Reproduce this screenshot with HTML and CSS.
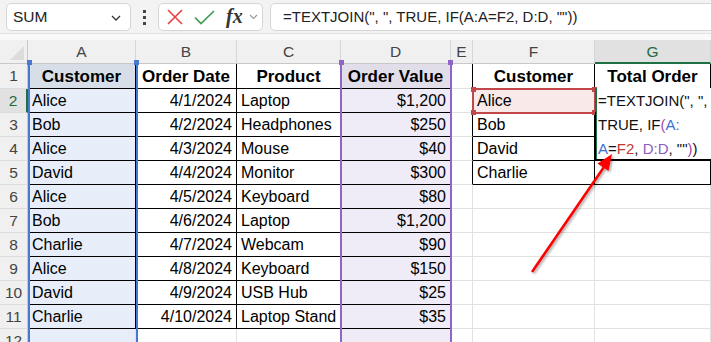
FILE: index.html
```html
<!DOCTYPE html>
<html>
<head>
<meta charset="utf-8">
<link rel="stylesheet" href="styles.css">
</head>
<body>
<div class="app">
  <div class="toolbar">
    <div class="namebox">
      <span class="nb-text">SUM</span>
      <svg class="nb-chev" width="10" height="6" viewBox="0 0 10 6"><path d="M1 1 L5 5 L9 1" fill="none" stroke="#333" stroke-width="1.3"/></svg>
    </div>
    <div class="dots"><i></i><i></i><i></i></div>
    <div class="iconbox">
      <svg width="16" height="16" viewBox="0 0 16 16"><path d="M1 1 L15 15 M15 1 L1 15" stroke="#e8403f" stroke-width="1.6" fill="none"/></svg>
      <svg width="21" height="15" viewBox="0 0 21 15"><path d="M1 7.5 L7 13.5 L20 1" stroke="#3f9a52" stroke-width="1.7" fill="none"/></svg>
      <span class="fx">fx</span>
      <svg width="9" height="6" viewBox="0 0 9 6"><path d="M1 1 L4.5 4.5 L8 1" fill="none" stroke="#999" stroke-width="1.2"/></svg>
    </div>
    <div class="formula">=TEXTJOIN(", ", TRUE, IF(A:A=F2, D:D, ""))</div>
  </div>
  <div class="strip"></div>
  <div class="sheet">
    <div class="corner"><span class="tri"></span></div>
    <div class="ch">A</div><div class="ch">B</div><div class="ch">C</div><div class="ch">D</div><div class="ch">E</div><div class="ch">F</div><div class="ch sel">G</div>

    <div class="rh">1</div>
    <div class="c bk hd fa1">Customer</div><div class="c bk hd">Order Date</div><div class="c bk hd">Product</div><div class="c bk hd fd1">Order Value</div><div class="c bkr"></div><div class="c bk hd">Customer</div><div class="c bk hd">Total Order</div>

    <div class="rh sel">2</div>
    <div class="c bk fa">Alice</div><div class="c bk r">4/1/2024</div><div class="c bk">Laptop</div><div class="c bk r fd">$1,200</div><div class="c bkr"></div><div class="c bk ff">Alice</div><div class="c"></div>

    <div class="rh">3</div>
    <div class="c bk fa">Bob</div><div class="c bk r">4/2/2024</div><div class="c bk">Headphones</div><div class="c bk r fd">$250</div><div class="c bkr"></div><div class="c bk">Bob</div><div class="c"></div>

    <div class="rh">4</div>
    <div class="c bk fa">Alice</div><div class="c bk r">4/3/2024</div><div class="c bk">Mouse</div><div class="c bk r fd">$40</div><div class="c bkr"></div><div class="c bk">David</div><div class="c bk"></div>

    <div class="rh">5</div>
    <div class="c bk fa">David</div><div class="c bk r">4/4/2024</div><div class="c bk">Monitor</div><div class="c bk r fd">$300</div><div class="c bkr"></div><div class="c bk">Charlie</div><div class="c bk"></div>

    <div class="rh">6</div>
    <div class="c bk fa">Alice</div><div class="c bk r">4/5/2024</div><div class="c bk">Keyboard</div><div class="c bk r fd">$80</div><div class="c"></div><div class="c"></div><div class="c"></div>

    <div class="rh">7</div>
    <div class="c bk fa">Bob</div><div class="c bk r">4/6/2024</div><div class="c bk">Laptop</div><div class="c bk r fd">$1,200</div><div class="c"></div><div class="c"></div><div class="c"></div>

    <div class="rh">8</div>
    <div class="c bk fa">Charlie</div><div class="c bk r">4/7/2024</div><div class="c bk">Webcam</div><div class="c bk r fd">$90</div><div class="c"></div><div class="c"></div><div class="c"></div>

    <div class="rh">9</div>
    <div class="c bk fa">Alice</div><div class="c bk r">4/8/2024</div><div class="c bk">Keyboard</div><div class="c bk r fd">$150</div><div class="c"></div><div class="c"></div><div class="c"></div>

    <div class="rh">10</div>
    <div class="c bk fa">David</div><div class="c bk r">4/9/2024</div><div class="c bk">USB Hub</div><div class="c bk r fd">$25</div><div class="c"></div><div class="c"></div><div class="c"></div>

    <div class="rh">11</div>
    <div class="c bk fa">Charlie</div><div class="c bk r">4/10/2024</div><div class="c bk">Laptop Stand</div><div class="c bk r fd">$35</div><div class="c"></div><div class="c"></div><div class="c"></div>

    <div class="rh">12</div>
    <div class="c fa"></div><div class="c"></div><div class="c"></div><div class="c fd"></div><div class="c"></div><div class="c"></div><div class="c"></div>

    <div class="hl hl-a"><span class="h tl"></span><span class="h tr"></span></div>
    <div class="hl hl-d"><span class="h tl"></span><span class="h tr"></span></div>
    <div class="hl hl-f"><span class="h tl"></span><span class="h tr"></span><span class="h bl"></span><span class="h br"></span></div>
    <div class="edit">
      <div>=TEXTJOIN(", ",</div>
      <div>TRUE, IF<span class="pp">(</span><span class="rb">A:</span></div>
      <div><span class="rb">A</span>=<span class="rr">F2</span>, <span class="rp">D:D</span>, ""<span class="pp">)</span>)</div>
    </div>
  </div>
  <svg class="arrow" width="711" height="342" viewBox="0 0 711 342">
    <defs>
      <filter id="sh" x="-20%" y="-20%" width="140%" height="140%">
        <feDropShadow dx="1.5" dy="1.5" stdDeviation="1.2" flood-color="#000" flood-opacity="0.35"/>
      </filter>
    </defs>
    <g filter="url(#sh)">
      <line x1="532" y1="272" x2="604" y2="167" stroke="#ff0000" stroke-width="2.6"/>
      <polygon points="612,154 608.5,171 597.5,163.5" fill="#ff0000"/>
    </g>
  </svg>
</div>
</body>
</html>
```

FILE: styles.css
```css
html, body {
  margin: 0;
  padding: 0;
}
body {
  width: 711px;
  height: 342px;
  overflow: hidden;
  background: #ffffff;
  font-family: "Liberation Sans", Arial, sans-serif;
  color: #000;
}
.app {
  position: relative;
  width: 711px;
  height: 342px;
  overflow: hidden;
}
.toolbar {
  height: 34px;
  background: #f3f3f3;
  display: flex;
  align-items: flex-start;
  padding-top: 3px;
  box-sizing: border-box;
  border-bottom: 1px solid #e2e2e2;
}
.namebox {
  margin-left: 6px;
  width: 125px;
  height: 28px;
  box-sizing: border-box;
  background: #fff;
  border: 1px solid #d6d6d6;
  border-radius: 5px;
  display: flex;
  align-items: center;
  justify-content: space-between;
  padding: 0 9px 0 6px;
  font-size: 15.5px;
  color: #222;
}
.nb-chev { margin-top: 1px; }
.dots {
  width: 27px;
  display: flex;
  flex-direction: column;
  align-items: center;
  justify-content: center;
  gap: 3px;
  height: 28px;
}
.dots i {
  display: block;
  width: 3px;
  height: 3px;
  background: #444;
}
.iconbox {
  width: 105px;
  height: 28px;
  box-sizing: border-box;
  background: #fff;
  border: 1px solid #d6d6d6;
  border-radius: 5px;
  display: flex;
  align-items: center;
  padding-left: 8px;
  gap: 0;
}
.iconbox svg:nth-child(1) { margin-right: 11px; }
.iconbox svg:nth-child(2) { margin-right: 11px; }
.fx {
  font-family: "Liberation Serif", "DejaVu Serif", serif;
  font-style: italic;
  font-weight: bold;
  font-size: 20px;
  color: #333;
  margin-right: 6px;
  line-height: 1;
  margin-top: -2px;
}
.formula {
  margin-left: 7px;
  flex: 1;
  height: 28px;
  box-sizing: border-box;
  background: #fff;
  border: 1px solid #d6d6d6;
  border-radius: 5px;
  margin-right: -10px;
  padding-left: 12px;
  font-size: 15px;
  line-height: 26px;
  color: #222;
  white-space: nowrap;
}
.strip {
  height: 6px;
  background: #f9f9f9;
}
.sheet {
  position: relative;
  display: grid;
  grid-template-columns: 28px 108px 101px 104px 110px 22px 122px 1fr;
  grid-template-rows: 24px 25px repeat(11, 24px);
}
.corner {
  background: #f0f0f0;
  border-right: 1px solid #c8c8c8;
  border-bottom: 1px solid #c8c8c8;
  position: relative;
  box-sizing: border-box;
}
.corner .tri {
  position: absolute;
  right: 3px;
  bottom: 3px;
  width: 0;
  height: 0;
  border-left: 14px solid transparent;
  border-bottom: 14px solid #dcdcdc;
}
.ch {
  background: #f0f0f0;
  border-right: 1px solid #d6d6d6;
  border-bottom: 1px solid #c8c8c8;
  box-sizing: border-box;
  text-align: center;
  font-size: 15.5px;
  line-height: 24px;
  color: #444;
}
.ch.sel {
  background: #e1e1e1;
  color: #1e6b40;
  border-bottom: 2px solid #1e7145;
}
.rh {
  background: #f0f0f0;
  border-right: 1px solid #c8c8c8;
  border-bottom: 1px solid #dcdcdc;
  box-sizing: border-box;
  text-align: center;
  font-size: 15.5px;
  line-height: 24px;
  color: #444;
  overflow: hidden;
}
.rh.sel {
  background: #e1e1e1;
  color: #1e6b40;
  border-right: 2px solid #1e7145;
}
.c {
  border-right: 1px solid #e1e1e1;
  border-bottom: 1px solid #e1e1e1;
  box-sizing: border-box;
  font-size: 16px;
  line-height: 24px;
  padding: 0 4px;
  white-space: nowrap;
  overflow: hidden;
}
.c.bk {
  border-right-color: #000;
  border-bottom-color: #000;
}
.c.bkr {
  border-right-color: #000;
}
.c.r { text-align: right; padding-right: 4px; }
.c.hd {
  font-weight: bold;
  font-size: 17px;
  text-align: center;
  line-height: 26px;
  padding: 0;
}
.fa { background: #e8eef9; }
.fa1 { background: #d7dee8; }
.fd { background: #efecf7; }
.fd1 { background: #e1deea; }
.ff { background: #fae9e9; }

.hl {
  position: absolute;
  box-sizing: border-box;
  pointer-events: none;
}
.hl-a {
  left: 28px;
  top: 23px;
  width: 110px;
  height: 300px;
  border-left: 2px solid #4a78cf;
  border-right: 2px solid #4a78cf;
}
.hl-d {
  left: 340px;
  top: 23px;
  width: 112px;
  height: 300px;
  border-left: 2px solid #8d66c6;
  border-right: 2px solid #8d66c6;
}
.hl-f {
  left: 472px;
  top: 48px;
  width: 124px;
  height: 26px;
  border: 2px solid #c2474a;
}
.h {
  position: absolute;
  width: 5px;
  height: 5px;
}
.hl-a .h { background: #4a78cf; }
.hl-d .h { background: #8d66c6; }
.hl-f .h { background: #c2474a; }
.tl { left: -3px; top: -3px; }
.tr { right: -3px; top: -3px; }
.bl { left: -3px; bottom: -3px; }
.br { right: -3px; bottom: -3px; }

.edit {
  position: absolute;
  left: 595px;
  top: 48px;
  width: 120px;
  height: 72px;
  background: #fff;
  box-sizing: border-box;
  border-left: 2px solid #1e7145;
  border-bottom: 1px solid #000;
  padding-left: 1px;
  padding-top: 1px;
  font-size: 15px;
  line-height: 24px;
  white-space: nowrap;
  color: #111;
}
.edit::after {
  content: "";
  position: absolute;
  left: -2px;
  top: 24px;
  width: 1px;
  height: 48px;
  background: #000;
}
.rb { color: #3d6fd6; }
.rr { color: #c0392b; }
.rp { color: #8e5cc4; }
.pp { color: #a04aa8; }
.arrow {
  position: absolute;
  left: 0;
  top: 0;
  pointer-events: none;
}
```
